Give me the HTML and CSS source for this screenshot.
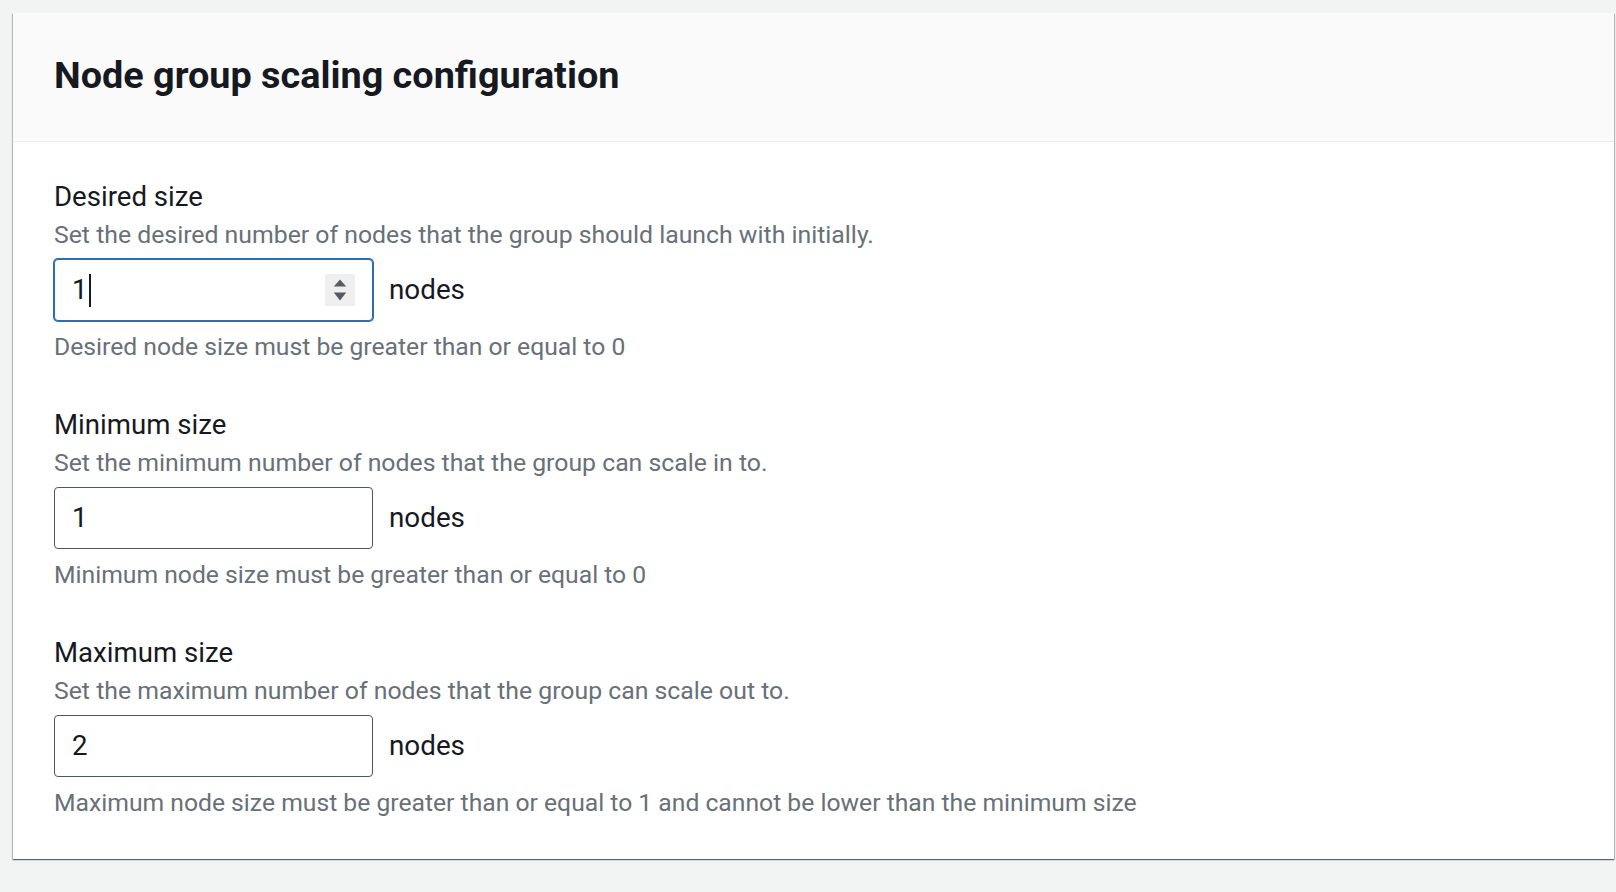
FILE: index.html
```html
<!DOCTYPE html>
<html lang="en">
<head>
<meta charset="utf-8">
<title>Node group scaling configuration</title>
<link rel="stylesheet" href="styles.css">
</head>
<body>
<div class="page">
  <section class="card">
    <header class="card-header">
      <h2 class="card-title">Node group scaling configuration</h2>
    </header>
    <div class="card-body">
      <div class="field">
        <div class="field-label">Desired size</div>
        <div class="field-desc">Set the desired number of nodes that the group should launch with initially.</div>
        <div class="field-row">
          <div class="input input-focused">
            <span class="input-value">1</span><span class="caret"></span>
            <span class="spinner">
              <svg width="30" height="32" viewBox="0 0 30 32" aria-hidden="true">
                <rect x="0" y="0" width="30" height="32" fill="#efefef"/>
                <path d="M15 5.5 L21.2 12.5 L8.8 12.5 Z" fill="#555b62"/>
                <path d="M8.8 18.5 L21.2 18.5 L15 26.5 Z" fill="#555b62"/>
              </svg>
            </span>
          </div>
          <span class="unit">nodes</span>
        </div>
        <div class="field-constraint">Desired node size must be greater than or equal to 0</div>
      </div>
      <div class="field">
        <div class="field-label">Minimum size</div>
        <div class="field-desc">Set the minimum number of nodes that the group can scale in to.</div>
        <div class="field-row">
          <div class="input"><span class="input-value">1</span></div>
          <span class="unit">nodes</span>
        </div>
        <div class="field-constraint">Minimum node size must be greater than or equal to 0</div>
      </div>
      <div class="field">
        <div class="field-label">Maximum size</div>
        <div class="field-desc">Set the maximum number of nodes that the group can scale out to.</div>
        <div class="field-row">
          <div class="input"><span class="input-value">2</span></div>
          <span class="unit">nodes</span>
        </div>
        <div class="field-constraint">Maximum node size must be greater than or equal to 1 and cannot be lower than the minimum size</div>
      </div>
    </div>
  </section>
</div>
</body>
</html>
```

FILE: styles.css
```css
html, body {
  margin: 0;
  padding: 0;
}

body {
  background: #f2f3f3;
  font-family: Roboto, "Liberation Sans", Arial, sans-serif;
  color: #16191f;
  width: 1616px;
  height: 892px;
  overflow: hidden;
}

.page {
  padding: 13px 2px 0 13px;
}

.card {
  background: #ffffff;
  box-shadow: 0 1px 1px 0 rgba(0, 28, 36, 0.45), 1px 1px 1px 0 rgba(0, 28, 36, 0.2), -1px 1px 1px 0 rgba(0, 28, 36, 0.2);
}

.card-header {
  background: #fafafa;
  border-bottom: 1px solid #eaeded;
  padding: 40px 41px 44px;
}

.card-title {
  margin: 0;
  font-size: 37.8px;
  line-height: 44px;
  font-weight: 700;
  color: #16191f;
}

.card-body {
  padding: 38px 41px 41px;
  display: flex;
  flex-direction: column;
  gap: 46px;
}

.field {
  display: flex;
  flex-direction: column;
}

.field-label {
  font-size: 27.6px;
  line-height: 34px;
  color: #16191f;
}

.field-desc {
  margin-top: 6px;
  font-size: 24.8px;
  line-height: 30px;
  color: #687078;
}

.field-row {
  margin-top: 9px;
  display: flex;
  align-items: center;
  gap: 16px;
}

.input {
  box-sizing: border-box;
  width: 319px;
  height: 62px;
  border: 1px solid #4f565e;
  border-radius: 4px;
  background: #fff;
  display: flex;
  align-items: center;
  padding: 0 17px 0 17px;
}

.input-focused {
  border-color: #2f6db3;
  box-shadow: 0 0 0 1px #2f6db3;
}

.input-value {
  font-size: 27.6px;
  line-height: 34px;
  color: #16191f;
}

.caret {
  width: 2px;
  height: 33px;
  background: #16191f;
  margin-left: 1px;
}

.spinner {
  margin-left: auto;
  display: flex;
}

.unit {
  font-size: 27.8px;
  line-height: 34px;
  color: #16191f;
}

.field-constraint {
  margin-top: 11px;
  font-size: 24.7px;
  line-height: 30px;
  color: #687078;
}
```
